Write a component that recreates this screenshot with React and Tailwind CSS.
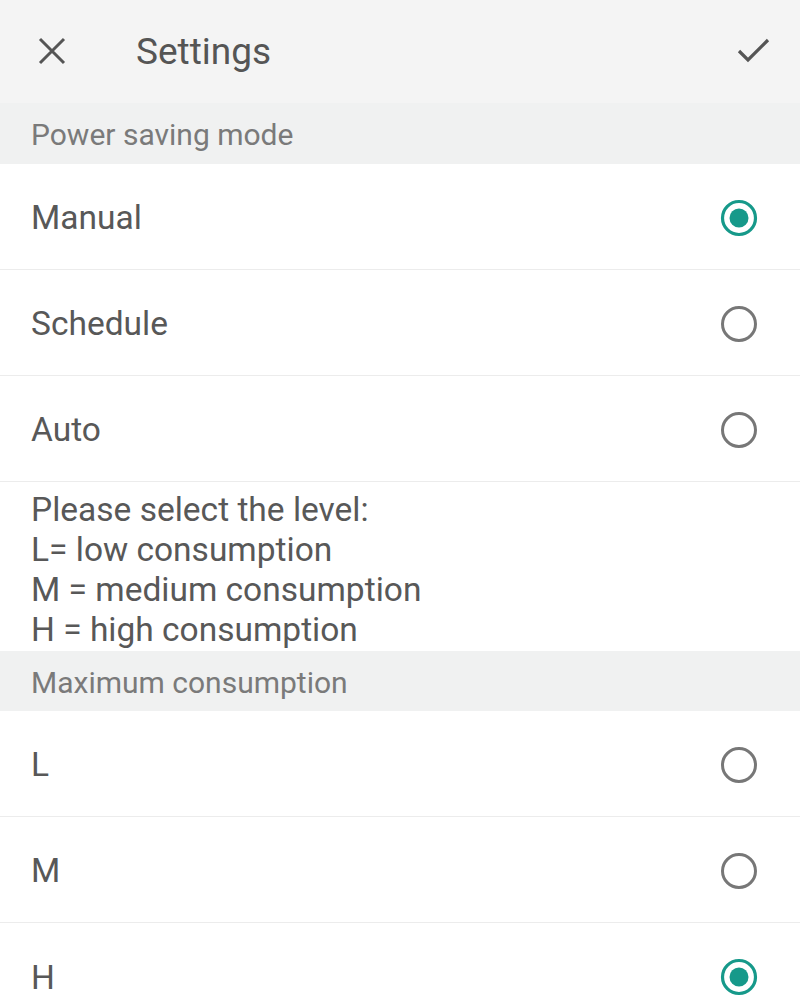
import React from "react";

function Radio({ checked }) {
  return (
    <svg width="40" height="40" viewBox="0 0 40 40" className="mt-[2px]">
      {checked ? (
        <>
          <circle cx="20" cy="20" r="16.5" fill="none" stroke="#16998a" strokeWidth="3.2" />
          <circle cx="20" cy="20" r="9.5" fill="#16998a" />
        </>
      ) : (
        <circle cx="20" cy="20" r="16.5" fill="none" stroke="#777777" strokeWidth="3" />
      )}
    </svg>
  );
}

function Row({ label, checked, last }) {
  return (
    <div className={`flex h-[106px] items-center justify-between bg-white pl-[31px] pr-[41px] ${last ? "" : "border-b border-[#ececec]"}`}>
      <span className="mt-[4px] text-[33.5px] text-[#585858]">{label}</span>
      <Radio checked={checked} />
    </div>
  );
}

function Section({ title, tall }) {
  return (
    <div className={`flex items-center bg-[#f0f1f1] pl-[31px] ${tall ? "h-[61px]" : "h-[60px]"}`}>
      <span className="mt-[2px] text-[30px] text-[#7a7a7a]">{title}</span>
    </div>
  );
}

export default function App() {
  return (
    <div className="h-[1006px] w-[800px] overflow-hidden bg-white" style={{ fontFamily: "Roboto, 'Noto Sans', sans-serif" }}>
      <div className="flex h-[103px] items-center bg-[#f4f4f4] pl-[36px] pr-[28px]">
        <svg width="32" height="32" viewBox="0 0 32 32" className="mt-[-2px]">
          <path d="M4 4 L28 28 M28 4 L4 28" stroke="#555" strokeWidth="3" fill="none" />
        </svg>
        <span className="ml-[68px] text-[37px] text-[#555555]">Settings</span>
        <div className="flex-1" />
        <svg width="36" height="30" viewBox="0 0 36 30">
          <path d="M3 14 L12 23 L32 3" stroke="#555" strokeWidth="3.2" fill="none" />
        </svg>
      </div>
      <Section title="Power saving mode" tall />
      <Row label="Manual" checked />
      <Row label="Schedule" />
      <Row label="Auto" />
      <div className="h-[169px] bg-white pl-[31px] pt-[8px] text-[33.5px] leading-[40px] text-[#585858]">
        <div>Please select the level:</div>
        <div>L= low consumption</div>
        <div>M = medium consumption</div>
        <div>H = high consumption</div>
      </div>
      <Section title="Maximum consumption" />
      <Row label="L" />
      <Row label="M" />
      <Row label="H" checked last />
    </div>
  );
}
